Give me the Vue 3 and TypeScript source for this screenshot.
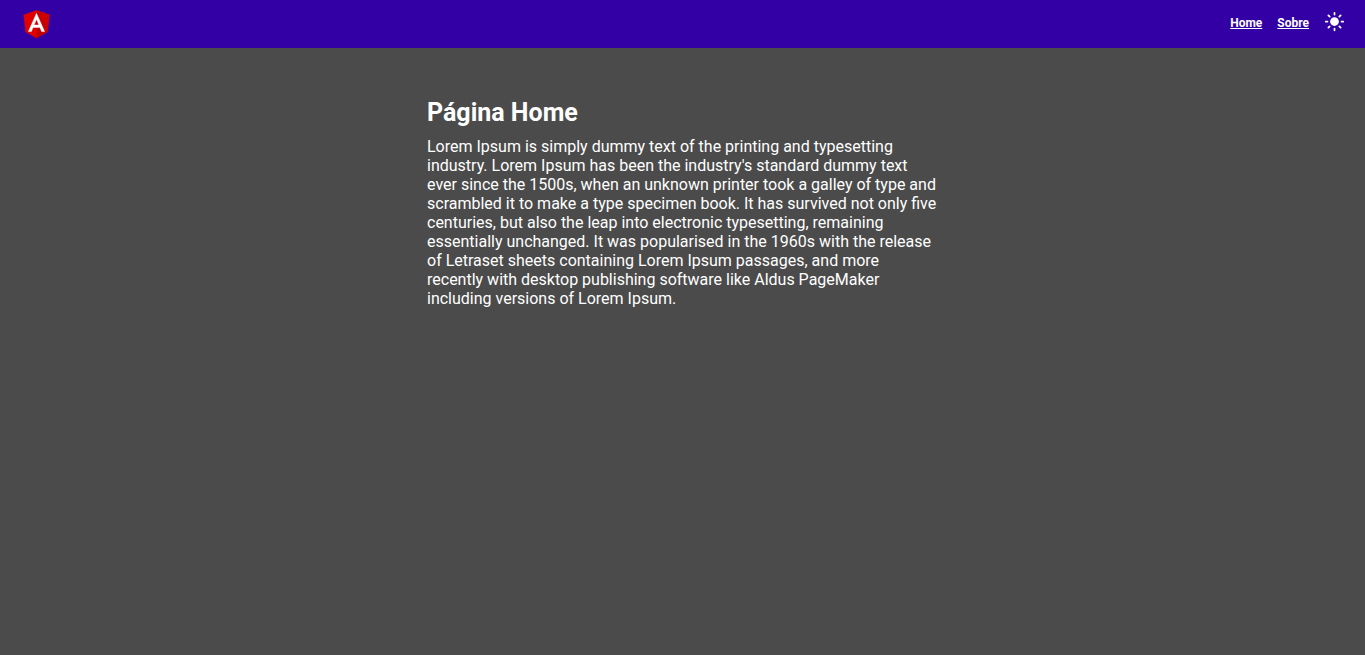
<script setup lang="ts">
import { ref } from 'vue'

interface NavLink {
  label: string
  href: string
}

const links: NavLink[] = [
  { label: 'Home', href: '#home' },
  { label: 'Sobre', href: '#sobre' },
]

const dark = ref<boolean>(true)
</script>

<template>
  <div class="app" :class="{ light: !dark }">
    <header class="bar">
      <a class="logo" href="#home" aria-label="Angular">
        <svg viewBox="0 0 250 250" width="35" height="35" aria-hidden="true">
          <defs>
            <linearGradient id="shade" x1="0" y1="1" x2="1" y2="0">
              <stop offset="0" stop-color="#b80000" />
              <stop offset="0.5" stop-color="#c60000" />
              <stop offset="1" stop-color="#d60000" />
            </linearGradient>
          </defs>
          <path fill="#e00000" d="M125 30 31.900 63.200 46.100 186.300 125 230 203.900 186.300 218.100 63.200z" />
          <path fill="url(#shade)" d="M125 30v200l78.900-43.700 14.200-123.100z" />
          <path
            fill="#fff"
            stroke="#fff"
            stroke-width="3"
            stroke-linejoin="bevel"
            d="M125 52.100 66.800 182.600h21.700l11.700-29.200h49.400l11.700 29.200H183zm17 83.300h-34l17-40.900z"
          />
        </svg>
      </a>
      <nav class="nav">
        <a v-for="link in links" :key="link.label" class="link" :href="link.href">{{ link.label }}</a>
        <button class="toggle" type="button" aria-label="Alternar tema" @click="dark = !dark">
          <svg viewBox="0 0 24 24" width="21" height="21" aria-hidden="true">
            <circle cx="12" cy="12" r="5" fill="#fff" />
            <path
              d="M12 2v2M12 20v2M2 12h2M20 12h2M5 5l1.500 1.500M17.500 17.500l1.500 1.500M5 19l1.500-1.500M17.500 6.500l1.500-1.500"
              fill="none"
              stroke="#fff"
              stroke-width="2"
              stroke-linecap="round"
            />
          </svg>
        </button>
      </nav>
    </header>
    <main class="page">
      <h1>Página Home</h1>
      <p>
        Lorem Ipsum is simply dummy text of the printing and typesetting industry. Lorem Ipsum has
        been the industry's standard dummy text ever since the 1500s, when an unknown printer took a
        galley of type and scrambled it to make a type specimen book. It has survived not only five
        centuries, but also the leap into electronic typesetting, remaining essentially unchanged.
        It was popularised in the 1960s with the release of Letraset sheets containing Lorem Ipsum
        passages, and more recently with desktop publishing software like Aldus PageMaker including
        versions of Lorem Ipsum.
      </p>
    </main>
  </div>
</template>

<style scoped>
.app {
  min-height: 100vh;
  background: #4b4b4b;
  color: #fff;
  font-family: Roboto, "Liberation Sans", sans-serif;
}

.app.light {
  background: #fff;
  color: #222;
}

.bar {
  display: flex;
  align-items: center;
  justify-content: space-between;
  height: 48px;
  padding: 0 20px 0 19px;
  background: #3200a5;
}

.logo {
  display: flex;
  padding-bottom: 1px;
}

.nav {
  display: flex;
  align-items: center;
  gap: 15px;
  padding-bottom: 5px;
}

.link {
  padding-top: 2px;
  color: #fff;
  font-size: 12px;
  font-weight: 700;
  line-height: 14px;
}

.toggle {
  display: flex;
  padding: 0;
  border: 0;
  background: none;
  cursor: pointer;
}

.page {
  max-width: 511px;
  margin: 0 auto;
  padding-top: 49px;
}

h1 {
  margin: 0 0 8px;
  font-size: 25px;
  font-weight: 700;
  line-height: 32px;
}

p {
  margin: 0;
  font-size: 16px;
  line-height: 19px;
}
</style>

<style>
body {
  margin: 0;
  background: #4b4b4b;
}
</style>
